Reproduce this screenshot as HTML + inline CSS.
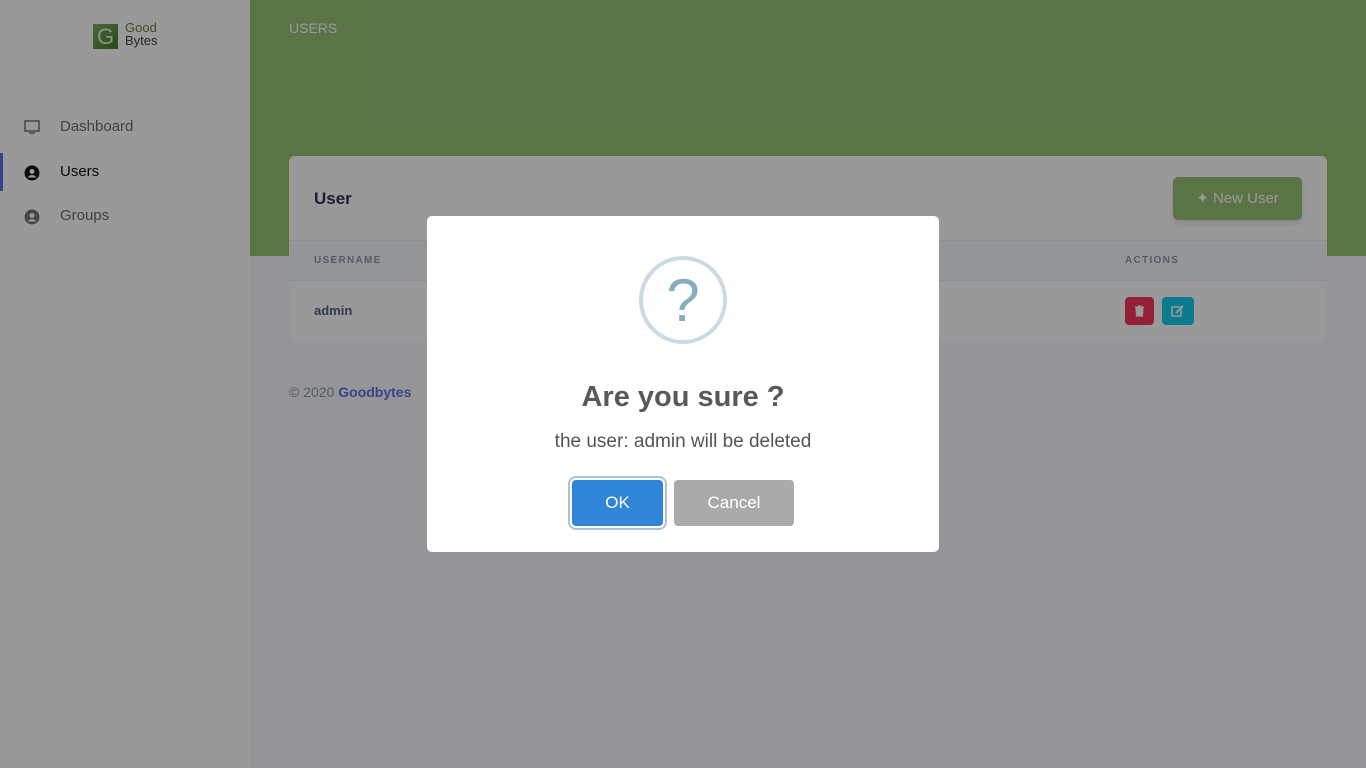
<!DOCTYPE html>
<html><head><meta charset="utf-8"><style>
*{box-sizing:border-box;margin:0;padding:0}
body{width:1366px;height:768px;overflow:hidden;font-family:"Liberation Sans",sans-serif;background:#f8f9fd;position:relative}
.side{position:absolute;left:0;top:0;width:250px;height:768px;background:#fff}
.logo{position:absolute;left:93px;top:24px;width:25px;height:25px;background:linear-gradient(135deg,#7fb061,#3f7a2a);color:#e8f0e0;font-size:22px;text-align:center;line-height:25px}
.lt{position:absolute;left:125px;top:21px;font-size:13px;line-height:13px}
.nav{position:absolute;left:0;width:250px;height:38px;font-size:15px;color:#6f6f6f}
.nav span{position:absolute;left:60px;top:10px}
.nav svg{position:absolute;left:24px;top:12px}
.hdr{position:absolute;left:250px;top:0;width:1116px;height:256px;background:#98c176}
.hdr .t{position:absolute;left:39px;top:20px;color:#fff;font-size:14px}
.card{position:absolute;left:289px;top:156px;width:1038px;height:185px;background:#fff;border-radius:6px;overflow:hidden}
.card h3{position:absolute;left:25px;top:33px;font-size:17px;color:#32325d}
.nb{position:absolute;left:884px;top:21px;width:129px;height:43px;background:#98c176;border-radius:5px;color:#fff;font-size:15px;line-height:43px;text-align:center;box-shadow:0 4px 6px rgba(50,50,93,.11)}
.th{position:absolute;left:0;top:84px;width:100%;height:41px;background:#f6f9fc;border-top:1px solid #e9ecef;border-bottom:1px solid #e9ecef;font-size:10px;letter-spacing:1.3px;color:#8898aa;font-weight:bold}
.th span{position:absolute;top:14px}
.adm{position:absolute;left:25px;top:147px;font-size:13px;color:#525f7f;font-weight:bold}
.b{position:absolute;top:141px;width:29px;height:28px;border-radius:4px}
.foot{position:absolute;left:289px;top:384px;font-size:14px;color:#8898aa}
.foot b{color:#5e72e4}
.ov{position:absolute;inset:0;background:rgba(0,0,0,.4)}
.modal{position:absolute;left:427px;top:216px;width:512px;height:336px;background:#fff;border-radius:5px;text-align:center}
.q{position:absolute;left:212px;top:40px;width:88px;height:88px;border:4px solid #c9dae1;border-radius:50%;color:#87adbd;font-size:60px;line-height:82px;font-weight:normal}
.modal h2{position:absolute;left:0;width:100%;top:165px;font-size:29px;color:#595959;font-weight:bold}
.modal p{position:absolute;left:0;width:100%;top:215px;font-size:19px;color:#545454}
.ok{position:absolute;left:145px;top:264px;width:91px;height:46px;background:#3085d6;border-radius:4px;color:#fff;font-size:17px;line-height:46px;box-shadow:0 0 0 2px #fff,0 0 0 4px rgba(50,100,150,.4)}
.cn{position:absolute;left:247px;top:264px;width:120px;height:46px;background:#aaa;border-radius:4px;color:#fff;font-size:17px;line-height:46px}
</style></head><body>
<div class="side">
<div class="logo">G</div>
<div class="lt"><span style="color:#5d8a3a">Good</span><br><span style="color:#444">Bytes</span></div>
<div class="nav" style="top:108px"><svg width="16" height="14" viewBox="0 0 16 14"><rect x="1" y="1" width="14" height="10" fill="none" stroke="#777" stroke-width="1.5"/><path d="M5 13h6" stroke="#777" stroke-width="1.5"/></svg><span>Dashboard</span></div>
<div class="nav" style="top:153px;color:#111;border-left:3px solid #5e72e4"><svg width="16" height="16" viewBox="0 0 16 16" style="left:21px"><circle cx="8" cy="8" r="7.5" fill="#111"/><circle cx="8" cy="6.5" r="2.5" fill="#fff"/><path d="M3.5 12.5q4.5-5 9 0" fill="#fff"/></svg><span style="left:57px">Users</span></div>
<div class="nav" style="top:197px"><svg width="16" height="16" viewBox="0 0 16 16"><circle cx="8" cy="8" r="7.5" fill="#777"/><circle cx="8" cy="6.5" r="2.5" fill="#fff"/><path d="M3.5 12.5q4.5-5 9 0" fill="#fff"/></svg><span>Groups</span></div>
</div>
<div class="hdr"><div class="t">USERS</div></div>
<div class="card">
<h3>User</h3>
<div class="nb">✦ New User</div>
<div class="th"><span style="left:25px">USERNAME</span><span style="left:836px">ACTIONS</span></div>
<div class="adm">admin</div>
<div class="b" style="left:836px;background:#f5365c"><svg width="29" height="28" viewBox="0 0 29 28"><path d="M10 10h9M13 9h3M11 11h7l-.6 8h-5.8z" fill="#fff" stroke="#fff" stroke-width="1.2"/></svg></div>
<div class="b" style="left:873px;width:32px;background:#11cdef"><svg width="32" height="28" viewBox="0 0 32 28"><rect x="10" y="10" width="9" height="9" fill="none" stroke="#fff" stroke-width="1.5"/><path d="M14 16l7-7" stroke="#fff" stroke-width="2"/></svg></div>
</div>
<div class="foot">© 2020 <b>Goodbytes</b></div>
<div class="ov"></div>
<div class="modal">
<div class="q">?</div>
<h2>Are you sure ?</h2>
<p>the user: admin will be deleted</p>
<div class="ok">OK</div>
<div class="cn">Cancel</div>
</div>
</body></html>
